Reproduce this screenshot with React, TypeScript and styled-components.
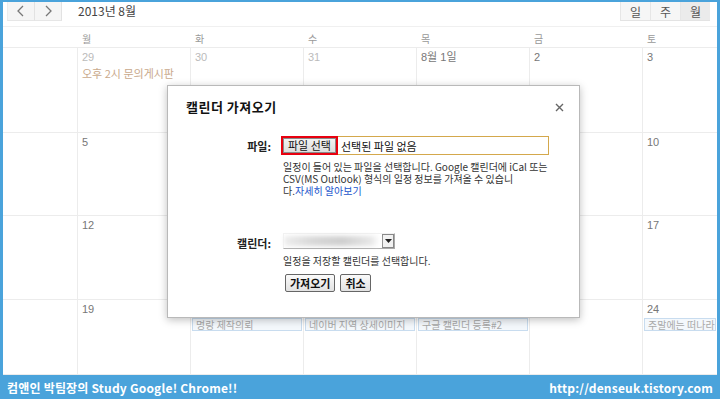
import React from 'react';
import styled, { createGlobalStyle } from 'styled-components';

const GlobalStyle = createGlobalStyle`
  html, body { margin: 0; padding: 0; background: #fff; }
  body { font-family: "Noto Sans CJK KR", "Liberation Sans", sans-serif; }
`;

const BLUE = '#4aa3db';

type Cell = { day: string; muted?: boolean; events?: { text: string; plain?: boolean }[] };

const weeks: { height: number; cells: Cell[] }[] = [
  {
    height: 85,
    cells: [
      { day: '29', muted: true, events: [{ text: '오후 2시 문의게시판', plain: true }] },
      { day: '30', muted: true },
      { day: '31', muted: true },
      { day: '8월 1일' },
      { day: '2' },
      { day: '3' },
    ],
  },
  { height: 83, cells: [{ day: '5' }, { day: '6' }, { day: '7' }, { day: '8' }, { day: '9' }, { day: '10' }] },
  { height: 84, cells: [{ day: '12' }, { day: '13' }, { day: '14' }, { day: '15' }, { day: '16' }, { day: '17' }] },
  {
    height: 75,
    cells: [
      { day: '19' },
      { day: '20', events: [{ text: '명랑 제작의뢰' }] },
      { day: '21', events: [{ text: '네이버 지역 상세이미지' }] },
      { day: '22', events: [{ text: '구글 캘린더 등록#2' }] },
      { day: '23' },
      { day: '24', events: [{ text: '주말에는 떠나라~' }] },
    ],
  },
];

const dayNames = ['월', '화', '수', '목', '금', '토'];

export default function App() {
  return (
    <>
      <GlobalStyle />
      <Frame>
        <Toolbar>
          <NavGroup>
            <NavButton>
              <svg width="10" height="14" viewBox="0 0 10 14">
                <path d="M7 2 L2 7 L7 12" fill="none" stroke="#777" strokeWidth="1.3" />
              </svg>
            </NavButton>
            <NavButton>
              <svg width="10" height="14" viewBox="0 0 10 14">
                <path d="M3 2 L8 7 L3 12" fill="none" stroke="#777" strokeWidth="1.3" />
              </svg>
            </NavButton>
          </NavGroup>
          <MonthTitle>2013년 8월</MonthTitle>
          <ViewGroup>
            <ViewButton>일</ViewButton>
            <ViewButton>주</ViewButton>
            <ViewButton active>월</ViewButton>
          </ViewGroup>
        </Toolbar>

        <HeaderRow>
          <Gutter />
          {dayNames.map((d) => (
            <HeadCell key={d}>{d}</HeadCell>
          ))}
        </HeaderRow>

        {weeks.map((w, i) => (
          <WeekRow key={i} style={{ height: w.height }}>
            <Gutter />
            {w.cells.map((c) => (
              <DayCell key={c.day}>
                <DayNum muted={c.muted}>{c.day}</DayNum>
                {c.events?.map((e) =>
                  e.plain ? (
                    <PlainEvent key={e.text}>{e.text}</PlainEvent>
                  ) : (
                    <EventChip key={e.text}>{e.text}</EventChip>
                  )
                )}
              </DayCell>
            ))}
          </WeekRow>
        ))}

        <Dialog>
          <DialogHead>
            <DialogTitle>캘린더 가져오기</DialogTitle>
            <Close>
              <svg width="9" height="9" viewBox="0 0 9 9">
                <path d="M1 1 L8 8 M8 1 L1 8" stroke="#666" strokeWidth="1.4" />
              </svg>
            </Close>
          </DialogHead>

          <FormRow>
            <Label>파일:</Label>
            <Field>
              <FileBox>
                <FileButton>파일 선택</FileButton>
                <FileName>선택된 파일 없음</FileName>
              </FileBox>
              <Help>
                일정이 들어 있는 파일을 선택합니다. Google 캘린더에 iCal 또는
                <br />
                CSV(MS Outlook) 형식의 일정 정보를 가져올 수 있습니
                <br />
                다.<HelpLink>자세히 알아보기</HelpLink>
              </Help>
            </Field>
          </FormRow>

          <FormRow second>
            <Label>캘린더:</Label>
            <Field>
              <Select>
                <Blurred />
                <SelectArrow>
                  <svg width="7" height="4" viewBox="0 0 7 4">
                    <path d="M0 0 H7 L3.5 4 Z" fill="#222" />
                  </svg>
                </SelectArrow>
              </Select>
              <Help>일정을 저장할 캘린더를 선택합니다.</Help>
              <Buttons>
                <ActionButton>가져오기</ActionButton>
                <ActionButton>취소</ActionButton>
              </Buttons>
            </Field>
          </FormRow>
        </Dialog>

        <Footer>
          <FooterText>컴앤인 박팀장의 Study Google! Chrome!!</FooterText>
          <FooterText>http://denseuk.tistory.com</FooterText>
        </Footer>
      </Frame>
    </>
  );
}

const Frame = styled.div`
  position: relative;
  width: 720px;
  height: 399px;
  box-sizing: border-box;
  border-top: 2px solid ${BLUE};
  border-left: 3px solid ${BLUE};
  border-right: 3px solid ${BLUE};
  display: flex;
  flex-direction: column;
  overflow: hidden;
  background: #fff;
`;

const Toolbar = styled.div`
  height: 25px;
  display: flex;
  align-items: flex-start;
  border-bottom: 1px solid #f0f0f0;
  box-sizing: border-box;
`;

const NavGroup = styled.div`
  display: flex;
  margin-left: 4px;
`;

const NavButton = styled.div`
  width: 26px;
  height: 18px;
  display: flex;
  align-items: center;
  justify-content: center;
  background: #f5f5f5;
  border-right: 1px solid #e2e2e2;
  border-bottom: 1px solid #e6e6e6;
  &:first-child {
    border-left: 1px solid #ececec;
  }
`;

const MonthTitle = styled.div`
  margin-left: 16px;
  margin-top: 2px;
  font-size: 12px;
  color: #444;
  line-height: 14px;
`;

const ViewGroup = styled.div`
  display: flex;
  margin-left: auto;
  margin-right: 7px;
`;

const ViewButton = styled.div<{ active?: boolean }>`
  width: 29px;
  height: 18px;
  display: flex;
  align-items: center;
  justify-content: center;
  font-size: 12px;
  color: #555;
  background: ${(p) => (p.active ? '#ebebeb' : '#f6f6f6')};
  border-left: 1px solid #e6e6e6;
  border-bottom: 1px solid #e3e3e3;
`;

const HeaderRow = styled.div`
  height: 21px;
  display: grid;
  grid-template-columns: 74px repeat(5, 113px) 1fr;
  border-bottom: 1px solid #ececec;
  box-sizing: border-box;
`;

const Gutter = styled.div``;

const HeadCell = styled.div`
  font-size: 10px;
  color: #999;
  padding: 4px 0 0 5px;
`;

const WeekRow = styled.div`
  display: grid;
  grid-template-columns: 74px repeat(5, 113px) 1fr;
  border-bottom: 1px solid #ececec;
  box-sizing: border-box;
  &:last-of-type {
    border-bottom: none;
  }
`;

const DayCell = styled.div`
  border-left: 1px solid #ececec;
  padding: 3px 0 0 0;
  display: flex;
  flex-direction: column;
  min-width: 0;
`;

const DayNum = styled.div<{ muted?: boolean }>`
  font-family: "Liberation Sans", "Noto Sans CJK KR", sans-serif;
  font-size: 11px;
  line-height: 13px;
  color: ${(p) => (p.muted ? '#bbb' : '#777')};
  padding-left: 4px;
`;

const PlainEvent = styled.div`
  font-size: 11px;
  line-height: 14px;
  margin-top: 2px;
  padding-left: 4px;
  color: #c9a98c;
  white-space: nowrap;
`;

const EventChip = styled.div`
  margin: 2px 1px 0 1px;
  height: 11px;
  border: 1px solid #c8dcef;
  background: #f4f8fc;
  font-size: 10px;
  line-height: 11px;
  color: #a9a9a9;
  padding-left: 3px;
  white-space: nowrap;
  overflow: hidden;
`;

const Dialog = styled.div`
  position: absolute;
  left: 164px;
  top: 83px;
  width: 413px;
  height: 233px;
  box-sizing: border-box;
  background: #fff;
  border: 1px solid #b9b9b9;
  box-shadow: 0 2px 8px rgba(0, 0, 0, 0.25);
  font-size: 11px;
  color: #222;
`;

const DialogHead = styled.div`
  display: flex;
  justify-content: space-between;
  align-items: flex-start;
  padding: 11px 15px 0 18px;
  height: 40px;
  box-sizing: border-box;
`;

const DialogTitle = styled.div`
  font-size: 13px;
  font-weight: bold;
  color: #111;
  letter-spacing: 0.5px;
`;

const Close = styled.div`
  margin-top: 2px;
`;

const FormRow = styled.div<{ second?: boolean }>`
  display: grid;
  grid-template-columns: 103px 1fr;
  column-gap: 10px;
  margin-top: ${(p) => (p.second ? '36px' : '10px')};
`;

const Label = styled.div`
  text-align: right;
  font-size: 11px;
  font-weight: bold;
  color: #222;
  padding-top: 2px;
`;

const Field = styled.div`
  display: flex;
  flex-direction: column;
`;

const FileBox = styled.div`
  width: 268px;
  height: 19px;
  display: flex;
  align-items: center;
  border: 1px solid #d4a84c;
  box-sizing: border-box;
`;

const FileButton = styled.div`
  height: 19px;
  box-sizing: border-box;
  margin: -1px 0 0 -1px;
  padding: 0 5px;
  display: flex;
  align-items: center;
  border: 2px solid #e8000f;
  background: linear-gradient(#f4f4f4, #dcdcdc);
  box-shadow: inset 0 0 0 1px #8a8a8a;
  font-size: 11px;
  color: #111;
`;

const FileName = styled.div`
  margin-left: 3px;
  font-size: 11px;
  color: #111;
`;

const Help = styled.div`
  margin-top: 6px;
  padding-left: 2px;
  font-size: 10px;
  line-height: 12px;
  color: #333;
`;

const HelpLink = styled.span`
  color: #2255cc;
`;

const Select = styled.div`
  width: 112px;
  height: 16px;
  display: flex;
  border: 1px solid #aaa;
  border-top-color: #f2f2f2;
  border-left-color: #f2f2f2;
  box-sizing: border-box;
  margin-left: 2px;
`;

const Blurred = styled.div`
  flex: 1;
  margin: 2px 2px 2px 0;
  background: linear-gradient(90deg, #eee 0%, #d8d8d8 30%, #cfcfcf 60%, #e6e6e6 90%, #fff 100%);
  filter: blur(2px);
`;

const SelectArrow = styled.div`
  width: 12px;
  display: flex;
  align-items: center;
  justify-content: center;
  border: 1px solid #888;
  background: #f2f2f2;
  box-sizing: border-box;
`;

const Buttons = styled.div`
  display: flex;
  gap: 5px;
  margin-top: 7px;
  padding-left: 4px;
`;

const ActionButton = styled.div`
  height: 16px;
  padding: 0 4px;
  display: flex;
  align-items: center;
  border: 1px solid #666;
  border-radius: 2px;
  background: linear-gradient(#fafafa, #e2e2e2);
  font-size: 11px;
  font-weight: bold;
  color: #111;
`;

const Footer = styled.div`
  margin-top: auto;
  height: 24px;
  margin-left: -3px;
  margin-right: -3px;
  background: ${BLUE};
  display: flex;
  align-items: center;
  justify-content: space-between;
  padding: 0 7px;
`;

const FooterText = styled.div`
  font-size: 12px;
  font-weight: bold;
  color: #fff;
  letter-spacing: 0.2px;
`;
